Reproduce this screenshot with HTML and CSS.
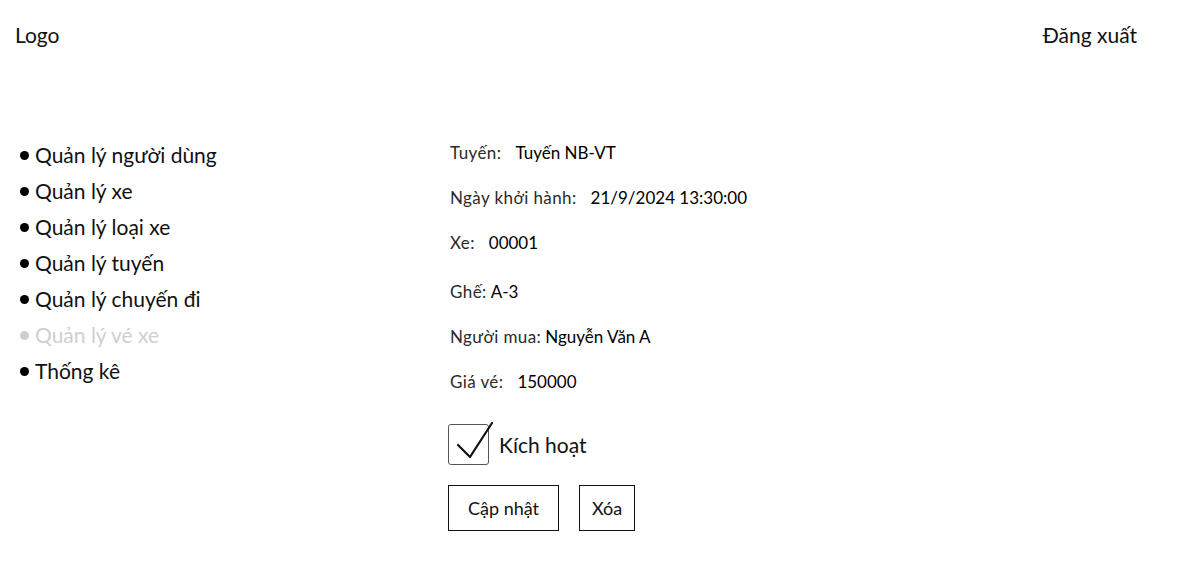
FILE: index.html
```html
<!DOCTYPE html>
<html lang="vi">
<head>
<meta charset="utf-8">
<link rel="stylesheet" href="styles.css">
</head>
<body>
<header class="topbar">
  <div class="logo">Logo</div>
  <div class="logout">Đăng xuất</div>
</header>
<main class="layout">
  <nav class="sidebar">
    <ul class="menu">
      <li>Quản lý người dùng</li>
      <li>Quản lý xe</li>
      <li>Quản lý loại xe</li>
      <li>Quản lý tuyến</li>
      <li>Quản lý chuyến đi</li>
      <li class="active">Quản lý vé xe</li>
      <li>Thống kê</li>
    </ul>
  </nav>
  <section class="detail">
    <div class="row r1"><span class="label">Tuyến:</span><span class="value">Tuyến NB-VT</span></div>
    <div class="row r2"><span class="label">Ngày khởi hành:</span><span class="value">21/9/2024 13:30:00</span></div>
    <div class="row r3"><span class="label">Xe:</span><span class="value">00001</span></div>
    <div class="row r4"><span class="label tight">Ghế:</span><span class="value">A-3</span></div>
    <div class="row r5"><span class="label tight">Người mua:</span><span class="value">Nguyễn Văn A</span></div>
    <div class="row r6"><span class="label">Giá vé:</span><span class="value">150000</span></div>
    <label class="check">
      <span class="box">
        <svg width="44" height="44" viewBox="0 0 44 44" class="tick"><path d="M8 23 L20 35 L42 1" fill="none" stroke="#111" stroke-width="2.2" stroke-linecap="round" stroke-linejoin="round"/></svg>
      </span>
      <span class="check-text">Kích hoạt</span>
    </label>
    <div class="actions">
      <button class="btn btn-update">Cập nhật</button>
      <button class="btn btn-delete">Xóa</button>
    </div>
  </section>
</main>
</body>
</html>
```
FILE: styles.css
```css
* { box-sizing: border-box; }
body {
  margin: 0;
  font-family: "Lato", "Open Sans", sans-serif;
  color: #111;
  background: #fff;
}
.topbar {
  display: flex;
  justify-content: space-between;
  align-items: center;
  height: 68px;
  padding: 0 61px 0 15px;
  font-size: 21px;
}
.layout {
  display: flex;
  padding-top: 69px;
}
.sidebar {
  width: 448px;
  padding-left: 20px;
}
.menu {
  list-style: none;
  margin: 0;
  padding: 0;
}
.menu li {
  font-size: 21px;
  height: 36px;
  line-height: 36px;
  display: flex;
  align-items: center;
}
.menu li::before {
  content: "";
  width: 9px;
  height: 9px;
  border-radius: 50%;
  background: #000;
  margin-right: 6px;
}
.menu li.active { color: #cfcfcf; }
.menu li.active::before { background: #cfcfcf; }
.detail {
  font-size: 17px;
  padding-left: 2px;
}
.row {
  height: 45px;
  display: flex;
  align-items: center;
}
.r1 { margin-top: -7px; }
.r3 { margin-bottom: 4px; }
.label { color: #2a2a2a; margin-right: 14px; letter-spacing: 0.4px; }
.label.tight { margin-right: 4px; }
.value { color: #000; }
.check {
  display: flex;
  align-items: center;
  margin-top: 20px;
}
.box {
  position: relative;
  width: 41px;
  height: 41px;
  border: 1.5px solid #555;
  border-radius: 3px;
  margin-left: -2px;
}
.tick { position: absolute; left: 1px; top: -3px; }
.check-text {
  font-size: 21px;
  margin-left: 10px;
}
.actions {
  display: flex;
  gap: 20px;
  margin-top: 20px;
  margin-left: -2px;
}
.btn {
  font-family: inherit;
  font-size: 18px;
  background: #fff;
  border: 1px solid #111;
  color: #111;
  height: 46px;
  padding: 0 19px;
}
.btn-delete { padding: 0 12px; }
```
